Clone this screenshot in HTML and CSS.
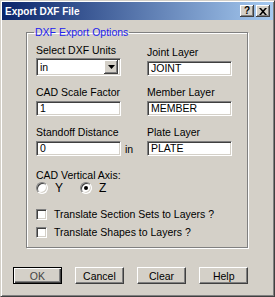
FILE: index.html
```html
<!DOCTYPE html>
<html lang="en">
<head>
    <meta charset="UTF-8">
    <title>Export DXF File</title>
    <link rel="stylesheet" href="styles.css">
</head>
<body>
    <div class="window">
        <div class="titlebar">
            <span class="title">Export DXF File</span>
            <div class="tbtns">
                <span class="tbtn">?</span>
                <span class="tbtn">
                    <svg width="8" height="7" viewBox="0 0 8 7"><path d="M0 0h2l2 2.3L6 0h2L5 3.5 8 7H6L4 4.7 2 7H0l3-3.5z" fill="#000"/></svg>
                </span>
            </div>
        </div>

        <div class="content">
            <fieldset class="group">
                <legend>DXF Export Options</legend>

                <div class="fields">
                    <div class="field">
                        <label>Select DXF Units</label>
                        <div class="select">
                            <span>in</span>
                            <span class="drop">
                                <svg width="7" height="4" viewBox="0 0 7 4"><path d="M0 0h7L3.5 4z" fill="#000"/></svg>
                            </span>
                        </div>
                    </div>
                    <div class="field">
                        <label>Joint Layer</label>
                        <div class="input">JOINT</div>
                    </div>

                    <div class="field">
                        <label>CAD Scale Factor</label>
                        <div class="input">1</div>
                    </div>
                    <div class="field">
                        <label>Member Layer</label>
                        <div class="input">MEMBER</div>
                    </div>

                    <div class="field">
                        <label>Standoff Distance</label>
                        <div class="unit-row">
                            <div class="input">0</div>
                            <span class="unit">in</span>
                        </div>
                    </div>
                    <div class="field">
                        <label>Plate Layer</label>
                        <div class="input">PLATE</div>
                    </div>
                </div>

                <div class="axis">CAD Vertical Axis:</div>
                <div class="radios">
                    <span class="radio"></span><span class="axis-name y">Y</span>
                    <span class="radio on"></span><span class="axis-name">Z</span>
                </div>

                <div class="check"><span class="box"></span>Translate Section Sets to Layers ?</div>
                <div class="check"><span class="box"></span>Translate Shapes to Layers ?</div>
            </fieldset>

            <div class="buttons">
                <button class="default">OK</button>
                <button>Cancel</button>
                <button>Clear</button>
                <button>Help</button>
            </div>
        </div>
    </div>
</body>
</html>
```

FILE: styles.css
```css
*{
    margin: 0;
    padding: 0;
    box-sizing: border-box;
}
body{
    background-color: #d4d0c8;
    font-family: "Liberation Sans", Arial, sans-serif;
    font-size: 10.5px;
    color: #000;
}
.window{
    width: 275px;
    height: 297px;
    border: 1px solid;
    border-color: #d4d0c8 #404040 #404040 #d4d0c8;
    box-shadow: inset 1px 1px #fff, inset -1px -1px #808080;
    padding: 1px;
    display: flex;
    flex-direction: column;
}
.titlebar{
    height: 18px;
    background: linear-gradient(to right, #0a246a, #a6caf0);
    display: flex;
    align-items: center;
    justify-content: space-between;
    padding: 0 3px 0 3px;
}
.title{
    color: #fff;
    font-weight: bold;
    font-size: 10px;
}
.tbtns{
    display: flex;
    gap: 2px;
}
.tbtn{
    width: 14px;
    height: 12px;
    background: #d4d0c8;
    box-shadow: inset -1px -1px #404040, inset 1px 1px #fff, inset -2px -2px #808080;
    display: flex;
    align-items: center;
    justify-content: center;
    font-weight: bold;
    font-size: 10px;
    line-height: 12px;
}

.content{
    flex: 1;
    padding: 6px 25px 0 24px;
}
.group{
    border: 1px solid #808080;
    box-shadow: inset 1px 1px #fff, 1px 1px #fff;
    padding: 6px 8px 9px 9px;
}
.group legend{
    color: #2222ee;
    line-height: 12px;
    padding: 0 1px;
    margin-left: -2px;
}

.fields{
    display: grid;
    grid-template-columns: 85px 85px;
    column-gap: 26px;
    row-gap: 10px;
}
.field{
    display: flex;
    flex-direction: column;
    justify-content: flex-end;
}
.field label{
    line-height: 12px;
    margin-bottom: 3px;
}
.input, .select{
    height: 15px;
    background: #fff;
    border: 1px solid;
    border-color: #808080 #fff #fff #808080;
    box-shadow: inset 1px 1px #404040, inset -1px -1px #d4d0c8;
    padding-left: 3px;
    line-height: 13px;
}
.select{
    height: 18px;
    margin-top: -1px;
    display: flex;
    align-items: center;
    justify-content: space-between;
    padding: 2px;
    padding-left: 3px;
}
.drop{
    width: 14px;
    height: 14px;
    background: #d4d0c8;
    box-shadow: inset -1px -1px #404040, inset 1px 1px #fff, inset -2px -2px #808080;
    display: flex;
    align-items: center;
    justify-content: center;
}
.unit-row{
    display: flex;
    align-items: center;
    width: 85px;
}
.unit-row .input{
    flex: 0 0 85px;
}
.unit{
    margin-left: 4px;
}

.axis{
    margin-top: 13px;
    line-height: 12px;
}
.radios{
    display: flex;
    align-items: center;
    height: 13px;
}
.radio{
    width: 12px;
    height: 12px;
    border-radius: 50%;
    background: #fff;
    border: 1px solid;
    border-color: #808080 #fff #fff #808080;
    box-shadow: inset 1px 1px #404040, inset -1px -1px #d4d0c8;
    display: flex;
    align-items: center;
    justify-content: center;
}
.radio.on::after{
    content: "";
    width: 4px;
    height: 4px;
    border-radius: 50%;
    background: #000;
}
.axis-name{
    font-size: 12px;
    margin-left: 7px;
}
.axis-name.y{
    margin-right: 17px;
}

.check{
    display: flex;
    align-items: center;
    height: 12px;
    margin-top: 14px;
}
.check + .check{
    margin-top: 6px;
}
.box{
    width: 11px;
    height: 11px;
    background: #fff;
    border: 1px solid;
    border-color: #808080 #fff #fff #808080;
    box-shadow: inset 1px 1px #404040, inset -1px -1px #d4d0c8;
    margin-right: 7px;
}

.buttons{
    display: flex;
    gap: 13.5px;
    margin: 19px 0 0 -13px;
}
button{
    width: 52px;
    height: 17px;
    background: #d4d0c8;
    border: 1px solid;
    border-color: #fff #404040 #404040 #fff;
    box-shadow: inset -1px -1px #808080;
    font-family: "Liberation Sans", Arial, sans-serif;
    font-size: 10.5px;
    color: #000;
}
button.default{
    border: 1px solid #000;
    box-shadow: inset 1px 1px #fff, inset -1px -1px #404040, inset -2px -2px #808080;
    color: #444;
}
```
